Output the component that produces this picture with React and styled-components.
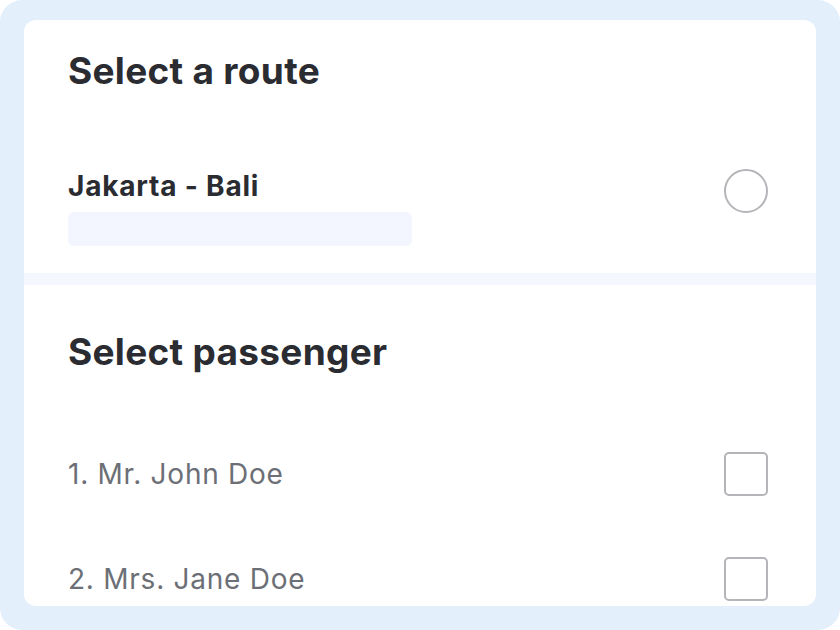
import React from "react";
import styled, { createGlobalStyle } from "styled-components";

const Global = createGlobalStyle`
  html, body { margin: 0; padding: 0; background: #ffffff; }
  body { font-family: Inter, "Noto Sans", sans-serif; }
  * { box-sizing: border-box; }
`;

const Frame = styled.div`
  width: 840px;
  height: 630px;
  background: #e4effc;
  border-radius: 22px;
  padding: 20px 24px 24px;
  display: flex;
`;

const Card = styled.div`
  flex: 1;
  background: #ffffff;
  border-radius: 12px;
  overflow: hidden;
  display: flex;
  flex-direction: column;
`;

const Section = styled.section`
  padding: ${(p) => p.$pad};
  display: flex;
  flex-direction: column;
  gap: ${(p) => p.$gap}px;
`;

const Title = styled.h2`
  margin: 0;
  font-size: 37px;
  line-height: 44px;
  font-weight: 700;
  letter-spacing: 0.3px;
  color: #2a2c31;
`;

const Row = styled.div`
  display: flex;
  justify-content: space-between;
  align-items: ${(p) => p.$align || "center"};
`;

const RouteInfo = styled.div`
  display: flex;
  flex-direction: column;
  gap: 8px;
`;

const RouteName = styled.div`
  font-size: 28px;
  line-height: 36px;
  font-weight: 700;
  letter-spacing: 0.8px;
  color: #2a2c31;
`;

const Placeholder = styled.div`
  width: 344px;
  height: 34px;
  border-radius: 6px;
  background: #f3f6fe;
`;

const Radio = styled.span`
  width: 44px;
  height: 44px;
  border-radius: 50%;
  border: 2px solid #b4b5b9;
  margin-top: 1px;
  flex-shrink: 0;
`;

const Divider = styled.div`
  height: 12px;
  background: #f4f7fd;
  flex-shrink: 0;
`;

const List = styled.div`
  display: flex;
  flex-direction: column;
  gap: 61px;
`;

const PassengerName = styled.span`
  font-size: 28px;
  line-height: 44px;
  font-weight: 400;
  letter-spacing: 0.75px;
  color: #6c6f76;
`;

const Checkbox = styled.span`
  width: 44px;
  height: 44px;
  border-radius: 5px;
  border: 2px solid #b4b5b9;
  flex-shrink: 0;
`;

const passengers = ["1. Mr. John Doe", "2. Mrs. Jane Doe"];

export default function App() {
  return (
    <>
      <Global />
      <Frame>
        <Card>
          <Section $pad="29px 48px 27px 44px" $gap={75}>
            <Title>Select a route</Title>
            <Row $align="flex-start">
              <RouteInfo>
                <RouteName>Jakarta - Bali</RouteName>
                <Placeholder />
              </RouteInfo>
              <Radio />
            </Row>
          </Section>
          <Divider />
          <Section $pad="45px 48px 0 44px" $gap={78}>
            <Title>Select passenger</Title>
            <List>
              {passengers.map((p) => (
                <Row key={p}>
                  <PassengerName>{p}</PassengerName>
                  <Checkbox />
                </Row>
              ))}
            </List>
          </Section>
        </Card>
      </Frame>
    </>
  );
}
